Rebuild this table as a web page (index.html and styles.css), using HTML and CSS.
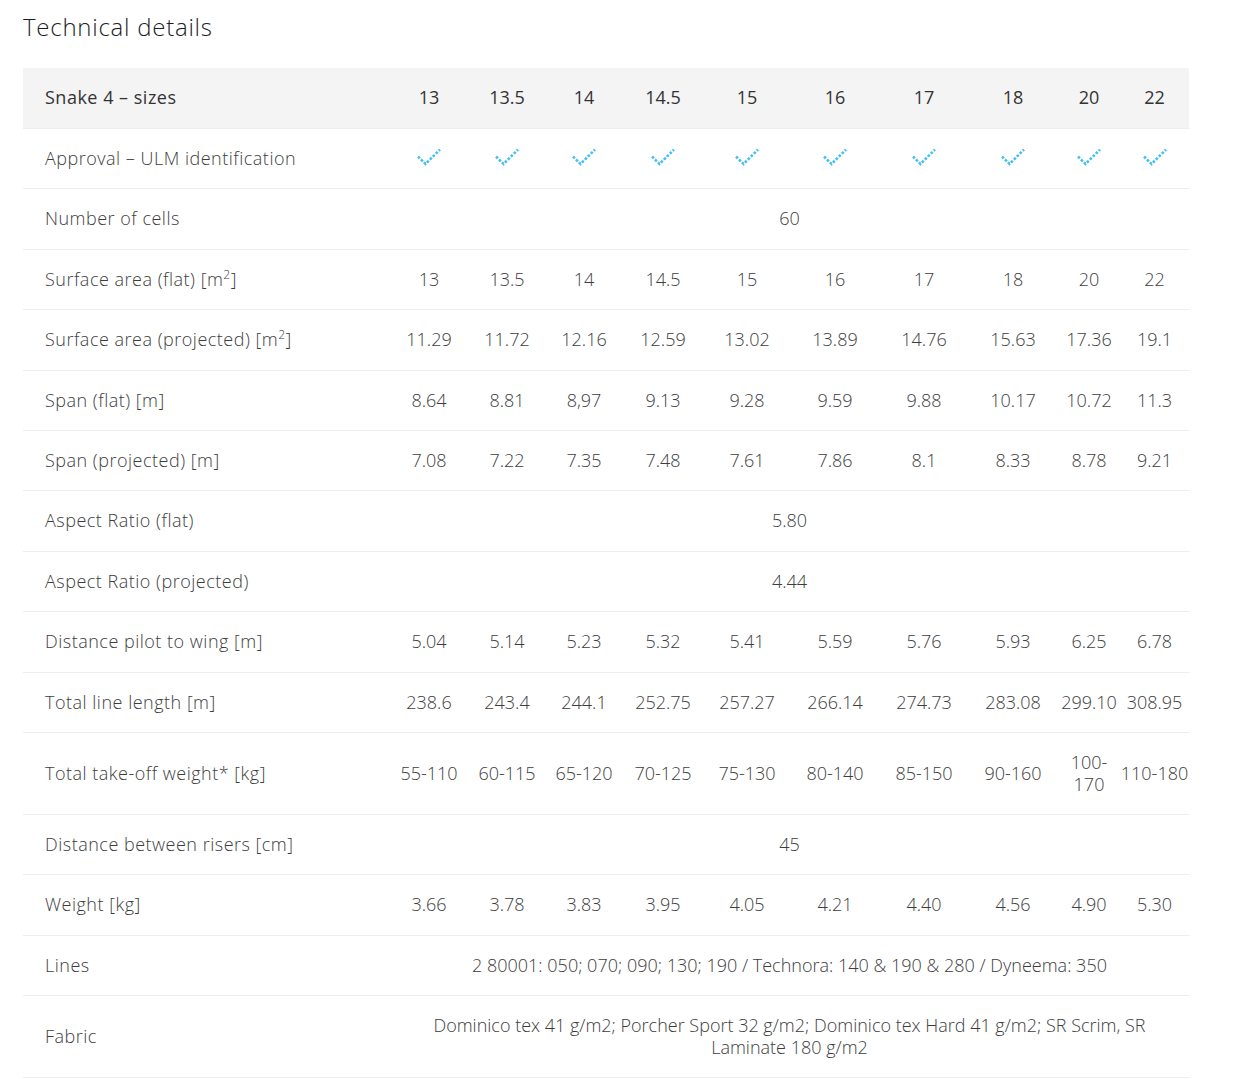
FILE: index.html
```html
<!DOCTYPE html>
<html lang="en">
<head>
<meta charset="utf-8">
<title>Technical details</title>
<link rel="stylesheet" href="styles.css">
</head>
<body>
<section class="tech">
  <h2 class="tech-title">Technical details</h2>
  <table class="spec">
    <colgroup>
      <col class="c-label">
      <col style="width:78px">
      <col style="width:78px">
      <col style="width:76px">
      <col style="width:82px">
      <col style="width:86px">
      <col style="width:90px">
      <col style="width:88px">
      <col style="width:90px">
      <col style="width:62px">
      <col style="width:69px">
    </colgroup>
    <thead>
      <tr>
        <th class="label">Snake 4 – sizes</th>
        <th>13</th><th>13.5</th><th>14</th><th>14.5</th><th>15</th><th>16</th><th>17</th><th>18</th><th>20</th><th>22</th>
      </tr>
    </thead>
    <tbody>
      <tr>
        <td class="label">Approval – ULM identification</td>
        <td><svg class="check" viewBox="0 0 24 20" width="24" height="20"><polyline points="1,7.5 8.5,15 23,0.5"/></svg></td>
        <td><svg class="check" viewBox="0 0 24 20" width="24" height="20"><polyline points="1,7.5 8.5,15 23,0.5"/></svg></td>
        <td><svg class="check" viewBox="0 0 24 20" width="24" height="20"><polyline points="1,7.5 8.5,15 23,0.5"/></svg></td>
        <td><svg class="check" viewBox="0 0 24 20" width="24" height="20"><polyline points="1,7.5 8.5,15 23,0.5"/></svg></td>
        <td><svg class="check" viewBox="0 0 24 20" width="24" height="20"><polyline points="1,7.5 8.5,15 23,0.5"/></svg></td>
        <td><svg class="check" viewBox="0 0 24 20" width="24" height="20"><polyline points="1,7.5 8.5,15 23,0.5"/></svg></td>
        <td><svg class="check" viewBox="0 0 24 20" width="24" height="20"><polyline points="1,7.5 8.5,15 23,0.5"/></svg></td>
        <td><svg class="check" viewBox="0 0 24 20" width="24" height="20"><polyline points="1,7.5 8.5,15 23,0.5"/></svg></td>
        <td><svg class="check" viewBox="0 0 24 20" width="24" height="20"><polyline points="1,7.5 8.5,15 23,0.5"/></svg></td>
        <td><svg class="check" viewBox="0 0 24 20" width="24" height="20"><polyline points="1,7.5 8.5,15 23,0.5"/></svg></td>
      </tr>
      <tr>
        <td class="label">Number of cells</td>
        <td colspan="10">60</td>
      </tr>
      <tr>
        <td class="label">Surface area (flat) [m<sup>2</sup>]</td>
        <td>13</td><td>13.5</td><td>14</td><td>14.5</td><td>15</td><td>16</td><td>17</td><td>18</td><td>20</td><td>22</td>
      </tr>
      <tr>
        <td class="label">Surface area (projected) [m<sup>2</sup>]</td>
        <td>11.29</td><td>11.72</td><td>12.16</td><td>12.59</td><td>13.02</td><td>13.89</td><td>14.76</td><td>15.63</td><td>17.36</td><td>19.1</td>
      </tr>
      <tr>
        <td class="label">Span (flat) [m]</td>
        <td>8.64</td><td>8.81</td><td>8,97</td><td>9.13</td><td>9.28</td><td>9.59</td><td>9.88</td><td>10.17</td><td>10.72</td><td>11.3</td>
      </tr>
      <tr>
        <td class="label">Span (projected) [m]</td>
        <td>7.08</td><td>7.22</td><td>7.35</td><td>7.48</td><td>7.61</td><td>7.86</td><td>8.1</td><td>8.33</td><td>8.78</td><td>9.21</td>
      </tr>
      <tr>
        <td class="label">Aspect Ratio (flat)</td>
        <td colspan="10">5.80</td>
      </tr>
      <tr>
        <td class="label">Aspect Ratio (projected)</td>
        <td colspan="10">4.44</td>
      </tr>
      <tr>
        <td class="label">Distance pilot to wing [m]</td>
        <td>5.04</td><td>5.14</td><td>5.23</td><td>5.32</td><td>5.41</td><td>5.59</td><td>5.76</td><td>5.93</td><td>6.25</td><td>6.78</td>
      </tr>
      <tr>
        <td class="label">Total line length [m]</td>
        <td>238.6</td><td>243.4</td><td>244.1</td><td>252.75</td><td>257.27</td><td>266.14</td><td>274.73</td><td>283.08</td><td>299.10</td><td>308.95</td>
      </tr>
      <tr>
        <td class="label">Total take-off weight* [kg]</td>
        <td>55-110</td><td>60-115</td><td>65-120</td><td>70-125</td><td>75-130</td><td>80-140</td><td>85-150</td><td>90-160</td><td class="wrap2">100-<br>170</td><td>110-180</td>
      </tr>
      <tr>
        <td class="label">Distance between risers [cm]</td>
        <td colspan="10">45</td>
      </tr>
      <tr>
        <td class="label">Weight [kg]</td>
        <td>3.66</td><td>3.78</td><td>3.83</td><td>3.95</td><td>4.05</td><td>4.21</td><td>4.40</td><td>4.56</td><td>4.90</td><td>5.30</td>
      </tr>
      <tr>
        <td class="label">Lines</td>
        <td colspan="10">2 80001: 050; 070; 090; 130; 190 / Technora: 140 &amp; 190 &amp; 280 / Dyneema: 350</td>
      </tr>
      <tr>
        <td class="label">Fabric</td>
        <td colspan="10" class="wrap">Dominico tex 41 g/m2; Porcher Sport 32 g/m2; Dominico tex Hard 41 g/m2; SR Scrim, SR Laminate 180 g/m2</td>
      </tr>
    </tbody>
  </table>
</section>
</body>
</html>
```

FILE: styles.css
```css
html, body {
  margin: 0;
  padding: 0;
  background: #ffffff;
}

body {
  font-family: "Open Sans", "Noto Sans", sans-serif;
  font-weight: 300;
  color: #3d3d3d;
}

.tech {
  padding: 12px 0 0 23px;
}

.tech-title {
  margin: 0 0 26px 0;
  font-size: 24px;
  line-height: 30px;
  font-weight: 300;
  letter-spacing: 0.75px;
  color: #1e1e1e;
}

.spec {
  width: 1166px;
  border-collapse: collapse;
  table-layout: fixed;
  font-size: 18px;
  line-height: 21.4px;
}

.c-label {
  width: 367px;
}

.spec th,
.spec td {
  padding: 19px 0;
  text-align: center;
  vertical-align: middle;
}

.spec thead th {
  padding: 19.3px 0;
  background: #f4f4f4;
  font-weight: 500;
  color: #333333;
}

.spec tbody td {
  border-top: 1px solid #eeeeee;
}

.spec tbody tr:last-child td {
  border-bottom: 1px solid #eeeeee;
}

.spec .label {
  text-align: left;
  padding-left: 22px;
  letter-spacing: 0.5px;
}

.spec sup {
  font-size: 12px;
  line-height: 0;
  vertical-align: 7px;
}

.spec .wrap,
.spec .wrap2 {
  line-height: 22px;
  padding-top: 18.4px;
  padding-bottom: 18.4px;
}

.spec .wrap {
  padding-left: 24px;
  padding-right: 24px;
}

.check {
  display: block;
  margin: 0 auto;
}

.check polyline {
  fill: none;
  stroke: #45bff8;
  stroke-width: 2.6;
  stroke-dasharray: 2.6 1.6;
}
```
